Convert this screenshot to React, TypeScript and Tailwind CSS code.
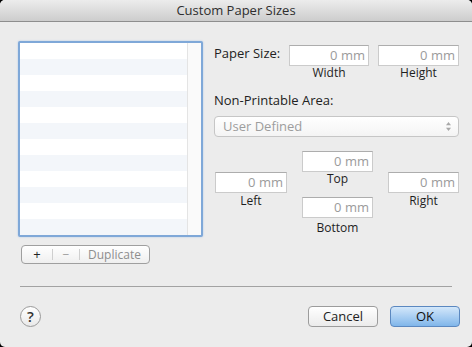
const font = { fontFamily: '"Open Sans", "DejaVu Sans", sans-serif' };

function Field({ className = "" }: { className?: string }) {
  return (
    <div
      className={`h-[21px] bg-white border border-[#cbcbcb] border-t-[#adadad] flex items-center justify-end pr-[3px] text-[13px] text-[#9b9b9b] ${className}`}
    >
      0 mm
    </div>
  );
}

function Caption({ children, className = "" }: { children: string; className?: string }) {
  return <div className={`text-[12px] leading-[14px] text-[#1e1e1e] text-center ${className}`}>{children}</div>;
}

export default function App() {
  const rows = Array.from({ length: 12 }, (_, i) => i);
  return (
    <div className="w-[472px] h-[347px] bg-black" style={font}>
      <div className="w-full h-full rounded-[5px] overflow-hidden bg-[#ececec] flex flex-col">
        {/* title bar */}
        <div className="h-[22px] shrink-0 bg-gradient-to-b from-[#ececec] to-[#cdcdcd] border-b border-[#8e8e8e] flex items-center justify-center text-[13px] text-[#2e2e2e]">
          Custom Paper Sizes
        </div>

        <div className="flex pl-[18px] pt-[19px]">
          {/* list + buttons */}
          <div className="flex flex-col w-[185px]">
            <div className="h-[196px] border-2 border-[#7fa8d8] rounded-[2px] bg-white flex shadow-[0_0_2px_#a9c6e8]">
              <div className="flex-1 flex flex-col">
                {rows.map((i) => (
                  <div key={i} className={`h-[16px] ${i % 2 ? "bg-[#f3f6fa]" : "bg-white"}`} />
                ))}
              </div>
              <div className="w-[14px] bg-[#fafafa] border-l border-[#e4e4e4]" />
            </div>
            <div className="mt-[8px] ml-[3px] w-[129px] h-[19px] rounded-[4px] border border-[#9f9f9f] bg-gradient-to-b from-white to-[#efefef] flex items-center text-[12px]">
              <div className="w-[30px] text-center text-[#222] text-[13px]">+</div>
              <div className="w-px h-[11px] bg-[#cfcfcf]" />
              <div className="w-[26px] text-center text-[#9a9a9a]">−</div>
              <div className="w-px h-[11px] bg-[#cfcfcf]" />
              <div className="flex-1 text-center text-[#8e8e8e]">Duplicate</div>
            </div>
          </div>

          {/* form */}
          <div className="ml-[11px] w-[246px] flex flex-col">
            <div className="mt-[4px] flex items-start">
              <div className="w-[75px] text-[13px] leading-[16px] text-[#222]">Paper Size:</div>
              <div className="w-[80px]">
                <Field />
                <Caption>Width</Caption>
              </div>
              <div className="w-[81px] ml-[9px]">
                <Field />
                <Caption>Height</Caption>
              </div>
            </div>

            <div className="mt-[12px] text-[13px] leading-[16px] text-[#222]">Non-Printable Area:</div>
            <div className="mt-[8px] h-[21px] w-[245px] rounded-[4px] border border-[#c6c6c6] bg-gradient-to-b from-white to-[#f4f4f4] flex items-center pl-[8px] pr-[6px] text-[13px] text-[#9d9d9d]">
              <span className="flex-1">User Defined</span>
              <svg width="7" height="11" viewBox="0 0 7 11">
                <path d="M3.5 1 L6 4.3 H1 Z" fill="#a8a8a8" />
                <path d="M3.5 10 L6 6.7 H1 Z" fill="#a8a8a8" />
              </svg>
            </div>

            <div className="mt-[14px] ml-[1px] flex">
              <div className="w-[72px] mt-[21px]">
                <Field />
                <Caption className="mt-[1px]">Left</Caption>
              </div>
              <div className="w-[71px] ml-[15px]">
                <Field />
                <Caption>Top</Caption>
                <Field className="mt-[11px]" />
                <Caption className="mt-[3px]">Bottom</Caption>
              </div>
              <div className="w-[71px] ml-[15px] mt-[21px]">
                <Field />
                <Caption className="mt-[1px]">Right</Caption>
              </div>
            </div>
          </div>
        </div>

        {/* separator */}
        <div className="mt-[auto] mx-[20px] h-px bg-[#a2a2a2]" />

        {/* footer */}
        <div className="mt-[19px] mb-[20px] pl-[20px] pr-[12px] flex items-center">
          <div className="w-[21px] h-[21px] rounded-full border border-[#9a9a9a] bg-gradient-to-b from-white to-[#e9e9e9] flex items-center justify-center text-[15px] font-semibold text-[#333]">
            ?
          </div>
          <div className="ml-auto w-[70px] h-[21px] rounded-[4px] border border-[#9c9c9c] bg-gradient-to-b from-white to-[#ebebeb] flex items-center justify-center text-[13px] text-[#222]">
            Cancel
          </div>
          <div className="ml-[12px] w-[70px] h-[21px] rounded-[4px] border border-[#5b88c0] bg-gradient-to-b from-[#d3e7fa] to-[#80b6ea] flex items-center justify-center text-[13px] text-[#111]">
            OK
          </div>
        </div>
      </div>
    </div>
  );
}
